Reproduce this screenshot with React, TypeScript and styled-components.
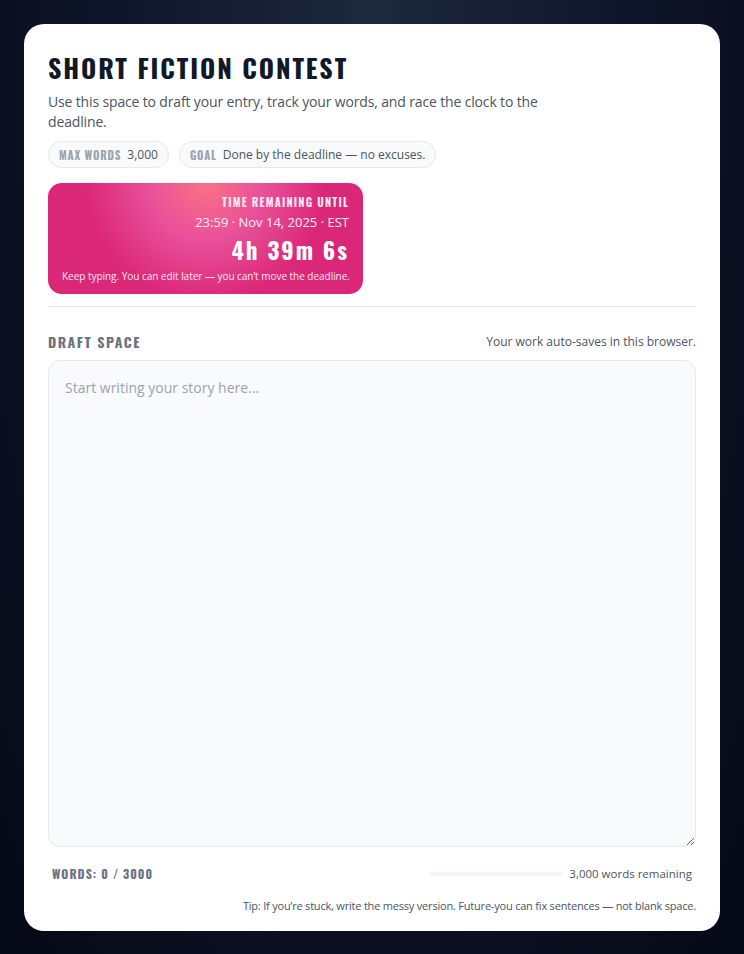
import { createGlobalStyle, styled } from 'styled-components'

const GlobalStyle = createGlobalStyle`
  html, body {
    margin: 0;
    padding: 0;
  }
  body {
    min-height: 954px;
    background: radial-gradient(ellipse at 50% 0%, #1e293b 0%, #0f172a 45%, #050816 100%);
    font-family: 'Open Sans', 'Noto Sans', sans-serif;
  }
  * { box-sizing: border-box; }
`

const condensed = `Oswald, 'DejaVu Sans Condensed', sans-serif`

const Page = styled.div`
  padding: 24px;
`

const Card = styled.main`
  background: #fff;
  border-radius: 20px;
  padding: 26px 24px 18px;
  display: flex;
  flex-direction: column;
  min-height: 906px;
`

const Title = styled.h1`
  margin: 0;
  font-family: ${condensed};
  font-weight: 700;
  font-size: 26px;
  line-height: 36px;
  letter-spacing: 1.9px;
  color: #111827;
`

const Subtitle = styled.p`
  margin: 6px 0 0;
  max-width: 520px;
  font-size: 14px;
  line-height: 20px;
  letter-spacing: -0.15px;
  color: #4b5563;
`

const Chips = styled.div`
  display: flex;
  gap: 10px;
  margin-top: 9px;
`

const Chip = styled.div`
  display: flex;
  align-items: center;
  gap: 6px;
  height: 27px;
  padding: 0 10px;
  border: 1px solid #e5e7eb;
  background: #f9fafb;
  border-radius: 999px;
  font-size: 12px;
  color: #4b5563;
`

const ChipLabel = styled.span`
  font-family: ${condensed};
  font-weight: 700;
  font-size: 11px;
  letter-spacing: 0.8px;
  color: #9ca3af;
`

const Countdown = styled.section`
  margin-top: 15px;
  width: 315px;
  border-radius: 14px;
  padding: 12px 14px 11px;
  text-align: right;
  color: #fff;
  background:
    radial-gradient(circle at 50% 0%, #fb7185 0%, rgba(244, 114, 182, 0.55) 30%, rgba(219, 39, 119, 0) 62%),
    #db2777;
`

const CountLabel = styled.div`
  font-family: ${condensed};
  font-weight: 700;
  font-size: 11px;
  line-height: 14px;
  letter-spacing: 1.2px;
  color: #fce7f3;
`

const CountDate = styled.div`
  margin-top: 4px;
  font-size: 13px;
  line-height: 18px;
  color: #fdf2f8;
`

const CountValue = styled.div`
  margin-top: 4px;
  font-family: ${condensed};
  font-weight: 700;
  font-size: 23px;
  line-height: 30px;
  letter-spacing: 2px;
`

const CountNote = styled.div`
  margin-top: 5px;
  font-size: 10px;
  line-height: 13px;
  letter-spacing: -0.03px;
  white-space: nowrap;
  color: #fce7f3;
`

const Divider = styled.hr`
  margin: 12px 0 0;
  border: 0;
  border-top: 1px solid #e5e7eb;
`

const SectionHead = styled.div`
  display: flex;
  justify-content: space-between;
  align-items: center;
  margin-top: 24px;
`

const SectionTitle = styled.h2`
  margin: 0;
  font-family: ${condensed};
  font-weight: 700;
  font-size: 14px;
  letter-spacing: 1.5px;
  color: #6b7280;
`

const Hint = styled.span`
  font-size: 12px;
  color: #4b5563;
`

const Draft = styled.textarea`
  margin-top: 8px;
  height: 487px;
  width: 100%;
  border: 1px solid #e5e7eb;
  border-radius: 12px;
  background: #f9fafb;
  padding: 16px;
  font-family: 'Open Sans', 'Noto Sans', sans-serif;
  font-size: 14px;
  line-height: 22px;
  color: #111827;
  resize: vertical;
  outline: none;
  &::placeholder {
    color: #9ca3af;
  }
`

const Footer = styled.div`
  display: flex;
  justify-content: space-between;
  align-items: center;
  margin-top: 18px;
  padding: 0 4px;
`

const Count = styled.span`
  font-family: ${condensed};
  font-weight: 700;
  font-size: 12px;
  letter-spacing: 1px;
  color: #6b7280;
`

const Remaining = styled.div`
  display: flex;
  align-items: center;
  gap: 7px;
  font-size: 11.5px;
  color: #4b5563;
`

const Track = styled.div`
  width: 133px;
  height: 4px;
  border-radius: 2px;
  background: #fdf2f8;
  overflow: hidden;
`

const Fill = styled.div`
  height: 100%;
  background: #db2777;
`

const Tip = styled.p`
  margin: 16px 0 0;
  text-align: right;
  font-size: 11px;
  letter-spacing: -0.2px;
  color: #4b5563;
`

export default function App() {
  const maxWords = 3000
  const words = 0
  return (
    <Page>
      <GlobalStyle />
      <Card>
        <Title>SHORT FICTION CONTEST</Title>
        <Subtitle>
          Use this space to draft your entry, track your words, and race the clock to the deadline.
        </Subtitle>
        <Chips>
          <Chip>
            <ChipLabel>MAX WORDS</ChipLabel>3,000
          </Chip>
          <Chip>
            <ChipLabel>GOAL</ChipLabel>Done by the deadline — no excuses.
          </Chip>
        </Chips>
        <Countdown>
          <CountLabel>TIME REMAINING UNTIL</CountLabel>
          <CountDate>23:59 · Nov 14, 2025 · EST</CountDate>
          <CountValue>4h 39m 6s</CountValue>
          <CountNote>Keep typing. You can edit later — you can’t move the deadline.</CountNote>
        </Countdown>
        <Divider />
        <SectionHead>
          <SectionTitle>DRAFT SPACE</SectionTitle>
          <Hint>Your work auto-saves in this browser.</Hint>
        </SectionHead>
        <Draft placeholder="Start writing your story here..." />
        <Footer>
          <Count>
            WORDS: {words} / {maxWords}
          </Count>
          <Remaining>
            <Track>
              <Fill style={{ width: `${(words / maxWords) * 100}%` }} />
            </Track>
            3,000 words remaining
          </Remaining>
        </Footer>
        <Tip>Tip: If you’re stuck, write the messy version. Future-you can fix sentences — not blank space.</Tip>
      </Card>
    </Page>
  )
}
